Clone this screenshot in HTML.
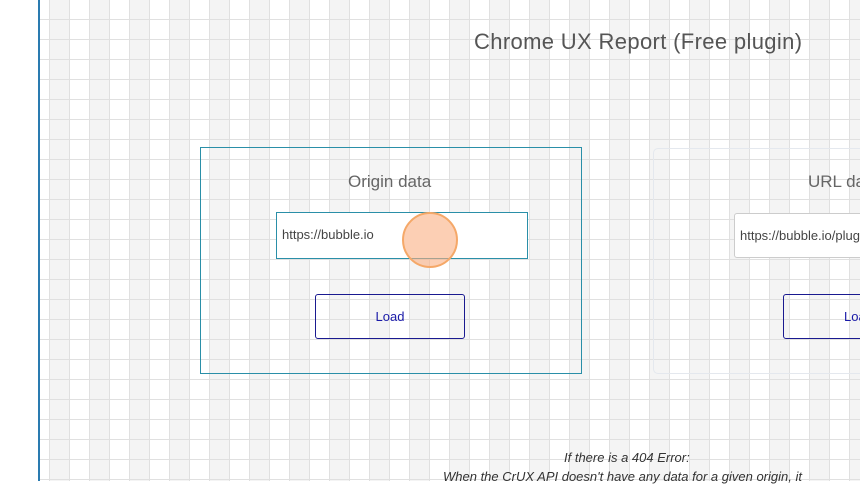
<!DOCTYPE html>
<html><head><style>
html,body{margin:0;padding:0}
body{width:860px;height:481px;overflow:hidden;position:relative;font-family:"Liberation Sans",sans-serif;
background-color:#fff;}
.grid{position:absolute;left:39px;top:0;width:821px;height:481px;
background-image:
linear-gradient(to right,#e0e0e0 1px,transparent 1px),
linear-gradient(to bottom,#e0e0e0 1px,transparent 1px),
linear-gradient(to right,transparent 0,transparent 10px,#f4f4f4 10px,#f4f4f4 30px,transparent 30px);
background-size:20px 100%,100% 20px,40px 100%;
background-position:10px 0,0 19px,0 0;}
.vline{position:absolute;left:38px;top:0;width:1.5px;height:481px;background:#2a7bb0}
.t{position:absolute;color:#555;white-space:nowrap}
.card1{position:absolute;left:200px;top:147px;width:380px;height:225px;border:1px solid #2a8fa8}
.card2{position:absolute;left:653px;top:148px;width:240px;height:224px;border:1px solid #e4e8ee;border-radius:5px}
.in{position:absolute;background:#fff;font-size:13px;color:#444;line-height:44px;padding-left:5px;box-sizing:border-box}
.btn{position:absolute;border:1px solid #1a1a90;border-radius:3px;color:#1a1aa8;font-size:13px;text-align:center;line-height:43px;box-sizing:border-box}
</style></head><body>
<div class="grid"></div>
<div class="vline"></div>
<div class="t" style="left:474px;top:29px;font-size:22px;letter-spacing:0.35px;color:#555">Chrome UX Report (Free plugin)</div>
<div class="card1"></div>
<div class="card2"></div>
<div class="t" style="left:348px;top:172px;font-size:17px;color:#666">Origin data</div>
<div class="t" style="left:808px;top:172px;font-size:17px;color:#666">URL data</div>
<div class="in" style="left:276px;top:212px;width:252px;height:47px;border:1.5px solid #2a8fa8">https://bubble.io</div>
<div class="in" style="left:734px;top:213px;width:140px;height:45px;border:1px solid #ccc;border-radius:3px">https://bubble.io/plugins</div>
<div style="position:absolute;left:402px;top:212px;width:52px;height:52px;border-radius:50%;background:rgba(250,175,130,0.6);border:2px solid #f5a868"></div>
<div class="btn" style="left:315px;top:294px;width:150px;height:45px">Load</div>
<div class="btn" style="left:783px;top:294px;width:150px;height:45px;text-align:left;padding-left:60px">Load</div>
<div class="t" style="left:564px;top:450px;font-size:13px;font-style:italic;color:#333">If there is a 404 Error:</div>
<div class="t" style="left:443px;top:469px;font-size:13px;font-style:italic;color:#333">When the CrUX API doesn't have any data for a given origin, it</div>
</body></html>
